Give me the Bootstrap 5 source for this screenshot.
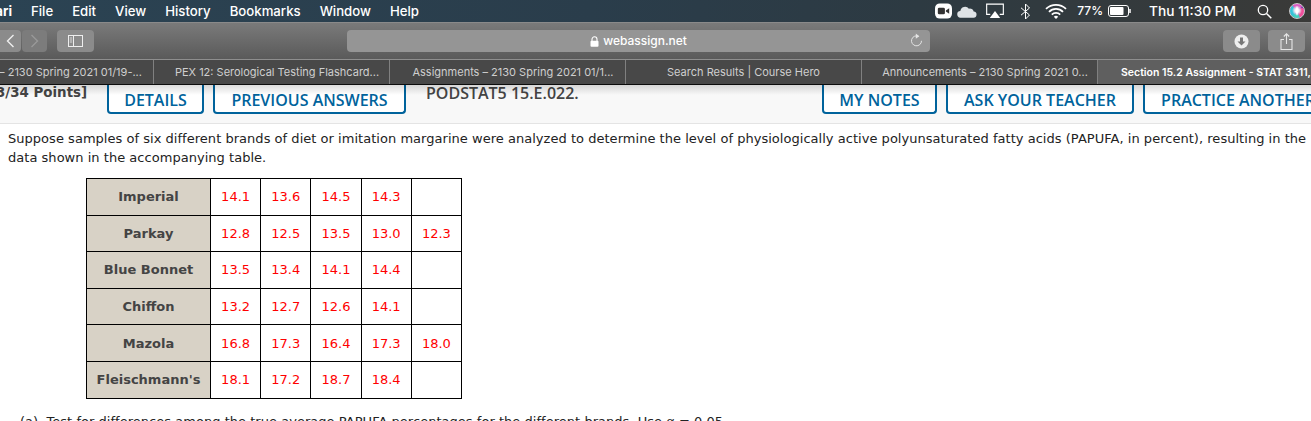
<!DOCTYPE html>
<html lang="en">

<head>
    <meta charset="UTF-8">
    <meta name="viewport" content="width=device-width, initial-scale=1.0">
    <title>Section 15.2 Assignment - STAT 3311</title>
    <link href="https://cdn.jsdelivr.net/npm/bootstrap@5.3.0/dist/css/bootstrap.min.css" rel="stylesheet">
    <style>
        html, body { height: 421px; overflow: hidden; background: #fff; }

        /* Mac menu bar */
        .menu-bar {
            height: 22px;
            background: linear-gradient(90deg, #2b4353 0%, #2a3d4b 45%, #2d3a42 70%, #3a3a38 100%);
            color: #fff;
            font: 500 13.2px/22px "Inter", "Liberation Sans", sans-serif;
            white-space: nowrap;
        }
        .menu-app { margin-left: -26px; font-weight: 700; margin-right: 19px; }
        .menu-item { margin-right: 19px; }
        .status-text { font-size: 12px; margin-right: 5px; }
        .clock { font-size: 13.7px; margin-right: 21px; }

        /* Safari toolbar */
        .tool-bar {
            height: 38px;
            background: linear-gradient(#7a7a7a, #5a5a5a);
            border-top: 1px solid #8a8a8a;
            border-bottom: 1px solid #8e8e8e;
            padding: 7px 6px 0 0;
        }
        .tool-btn {
            height: 22px;
            background: #8b8b8b;
            border-radius: 4px;
            display: flex;
            align-items: center;
            justify-content: center;
        }
        .btn-back { width: 21px; border-radius: 0 4px 4px 0; }
        .btn-forward { width: 25px; margin-left: 1px; background: #7c7c7c; }
        .btn-side { width: 37px; margin-left: 10px; }
        .btn-action { width: 37px; }
        .url-box {
            width: 583px;
            height: 22px;
            margin-left: 253px;
            margin-right: 293px;
            background: #959595;
            border-radius: 4px;
            color: #fff;
            font: 500 12px/22px "Inter", "Liberation Sans", sans-serif;
        }
        .url-reload { right: 7px; top: 3px; }

        /* Tabs */
        .tab-strip {
            height: 25px;
            background: #484848;
            border-bottom: 1px solid #0c0c0c;
            margin-left: -82px;
            width: 1460px;
        }
        .tab-item {
            width: 236px;
            flex: none;
            border-right: 1px solid #808080;
            color: #cfcfcf;
            font: 400 11px/25px "Inter", "Liberation Sans", sans-serif;
            text-align: center;
            white-space: nowrap;
        }
        .tab-cut { padding-left: 11px; }
        .tab-active {
            background: #5f5f5f;
            color: #fff;
            font-weight: 600;
            font-size: 10.5px;
            width: 300px;
            text-align: left;
            padding-left: 23px;
            border-right: 0;
        }

        /* Question header */
        .q-header {
            height: 39px;
            background: #f8f8f8;
            border-bottom: 1px solid #e4e4e4;
            overflow: hidden;
            white-space: nowrap;
        }
        .q-shade {
            left: 0;
            right: 0;
            top: 0;
            height: 10px;
            background: linear-gradient(rgba(0, 0, 0, .14), rgba(0, 0, 0, 0));
        }
        .q-points {
            margin-left: -4px;
            width: 111px;
            font: 700 13.4px/16px "DejaVu Sans", sans-serif;
            color: #444;
            flex: none;
        }
        .q-code {
            font: 600 16px/16px "Open Sans", sans-serif;
            color: #444;
            width: 396px;
            flex: none;
            margin-left: 20px;
        }
        .wa-btn {
            flex: none;
            height: 29px;
            padding: 4px 0 0;
            background: #fff;
            border: 2px solid #00639c;
            border-top: 0;
            border-radius: 0 0 4px 4px;
            color: #00639c;
            font: 600 16px/22px "Open Sans", sans-serif;
            text-align: center;
        }

        /* Question body */
        .q-text {
            font: 400 13px/19px "DejaVu Sans", sans-serif;
            letter-spacing: .03px;
            color: #222;
            padding: 5px 0 0 8px;
            width: 1311px;
        }
        .q-line { white-space: nowrap; }
        .data-table {
            width: 376px;
            margin: 11px 0 0 86px;
            border-collapse: collapse;
            table-layout: fixed;
            font: 400 13px/1 "DejaVu Sans", sans-serif;
        }
        .data-table td, .data-table th {
            border: 1px solid #000;
            text-align: center;
            vertical-align: middle;
            height: 36.6px;
            padding: 0;
            color: #f00;
        }
        .data-table th {
            width: 124px;
            background: #d8d2c6;
            color: #444;
            font-weight: 700;
        }
        .q-part {
            font: 400 13px/19px "DejaVu Sans", sans-serif;
            letter-spacing: .03px;
            color: #222;
            margin: 13px 0 0 20px;
            white-space: nowrap;
        }
    </style>
</head>

<body>

    <!-- Menu bar -->
    <div class="menu-bar d-flex">
        <span class="menu-app">Safari</span>
        <span class="menu-item">File</span>
        <span class="menu-item">Edit</span>
        <span class="menu-item">View</span>
        <span class="menu-item">History</span>
        <span class="menu-item">Bookmarks</span>
        <span class="menu-item">Window</span>
        <span class="menu-item">Help</span>
        <div class="ms-auto d-flex align-items-center">
            <!-- zoom -->
            <svg width="17" height="16" viewBox="0 0 18 16" style="margin-right:5px">
                <rect x="0" y="0" width="18" height="16" rx="5" fill="#fff"/>
                <rect x="3" y="4.500" width="7.500" height="7" rx="1.500" fill="#333"/>
                <path d="M11.500 7.500 15 5v6l-3.500-2.500z" fill="#333"/>
            </svg>
            <!-- cloud -->
            <svg width="20" height="13" viewBox="0 0 21 13" style="margin-right:9px">
                <path d="M4 13a3.500 3.500 0 0 1-.5-7 5 5 0 0 1 9-2.500 4 4 0 0 1 5 3A3.200 3.200 0 0 1 17 13z" fill="#dfe3e6"/>
            </svg>
            <!-- airplay -->
            <svg width="18" height="16" viewBox="0 0 19 16" style="margin-right:16px">
                <path d="M4.500 11.500H.7V.7h17.600v10.800h-3.800" fill="none" stroke="#fff" stroke-width="1.200"/>
                <path d="M9.500 8 15 15.500H4z" fill="#fff"/>
            </svg>
            <!-- bluetooth -->
            <svg width="11" height="17" viewBox="0 0 11 17" style="margin-right:14px">
                <path d="M1 4.800 9.500 12 5.500 16V1l4 4L1 12.200" fill="none" stroke="#fff" stroke-width="1"/>
            </svg>
            <!-- wifi -->
            <svg width="22" height="16" viewBox="0 0 22 16" style="margin-right:10px">
                <path d="M1 5.800a14.500 14.500 0 0 1 20 0M4 8.800a10 10 0 0 1 14 0M6.800 11.600a6 6 0 0 1 8.400 0" fill="none" stroke="#fff" stroke-width="1.800"/>
                <path d="M8.800 13.800a3.200 3.200 0 0 1 4.400 0L11 16z" fill="#fff"/>
            </svg>
            <span class="status-text">77%</span>
            <!-- battery -->
            <svg width="23" height="12" viewBox="0 0 23 12" style="margin-right:18px">
                <rect x=".5" y=".5" width="20" height="11" rx="2.500" fill="none" stroke="#fff"/>
                <rect x="2" y="2" width="13.500" height="8" rx="1" fill="#fff"/>
                <path d="M22 4v4" stroke="#fff" stroke-width="1.500"/>
            </svg>
            <span class="clock">Thu 11:30 PM</span>
            <!-- spotlight -->
            <svg width="15" height="15" viewBox="0 0 15 15" style="margin-right:17px">
                <circle cx="6" cy="6" r="4.700" fill="none" stroke="#fff" stroke-width="1.300"/>
                <path d="m9.500 9.500 4.800 4.800" stroke="#fff" stroke-width="1.500"/>
            </svg>
            <!-- siri -->
            <svg width="16" height="16" viewBox="0 0 16 16" style="margin-right:6px">
                <defs>
                    <clipPath id="siriClip"><circle cx="8" cy="8" r="7.200"/></clipPath>
                    <radialGradient id="siriGlow">
                        <stop offset="0" stop-color="#fff"/>
                        <stop offset=".45" stop-color="#f4e6f6"/>
                        <stop offset="1" stop-color="#f4e6f6" stop-opacity="0"/>
                    </radialGradient>
                </defs>
                <g clip-path="url(#siriClip)">
                    <rect width="16" height="16" fill="#7a3fb0"/>
                    <ellipse cx="3" cy="8" rx="4" ry="5.500" fill="#35c3d8"/>
                    <ellipse cx="8" cy="14" rx="5" ry="3" fill="#3fd0c0"/>
                    <ellipse cx="13" cy="10" rx="3.500" ry="5" fill="#f0509a"/>
                    <ellipse cx="8.500" cy="2.500" rx="4.500" ry="3" fill="#d85cc0"/>
                    <circle cx="8" cy="7.500" r="5" fill="url(#siriGlow)"/>
                    <path d="M8 2.500 9.600 8 8 13 6.400 8z" fill="#fff"/>
                </g>
                <circle cx="8" cy="8" r="7.500" fill="none" stroke="#e8e8e8" stroke-width=".8"/>
            </svg>
        </div>
    </div>

    <!-- Toolbar -->
    <div class="tool-bar d-flex">
        <div class="tool-btn btn-back">
            <svg width="9" height="14" viewBox="0 0 9 14"><path d="M7.500 1 1.500 7l6 6" fill="none" stroke="#eee" stroke-width="1.400"/></svg>
        </div>
        <div class="tool-btn btn-forward">
            <svg width="9" height="14" viewBox="0 0 9 14"><path d="m1.500 1 6 6-6 6" fill="none" stroke="#999" stroke-width="1.400"/></svg>
        </div>
        <div class="tool-btn btn-side">
            <svg width="15" height="12" viewBox="0 0 15 12">
                <rect x=".5" y=".5" width="14" height="11" fill="none" stroke="#eee"/>
                <path d="M5.500 .5v11" stroke="#eee"/>
                <path d="M1.800 3h2.400M1.800 5h2.400M1.800 7h2.400" stroke="#eee" stroke-width=".8"/>
            </svg>
        </div>
        <div class="url-box position-relative text-center">
            <svg width="9" height="11" viewBox="0 0 9 11" class="me-1">
                <path d="M2 5V3.300a2.500 2.500 0 0 1 5 0V5" fill="none" stroke="#fff" stroke-width="1.100"/>
                <rect x=".5" y="4.800" width="8" height="6" rx="1" fill="#fff"/>
            </svg>webassign.net
            <svg class="url-reload position-absolute" width="14" height="15" viewBox="0 0 14 15">
                <path d="M9.600 3.300a5 5 0 1 0 2.900 4.500" fill="none" stroke="#e4e4e4" stroke-width="1"/>
                <path d="M6.800 .5 10.300 3.300 6.800 5.800z" fill="#e4e4e4"/>
            </svg>
        </div>
        <div class="tool-btn btn-action">
            <svg width="15" height="15" viewBox="0 0 15 15">
                <circle cx="7.500" cy="7.500" r="7" fill="#eee"/>
                <path d="M6 3.500h3v4h2.500l-4 4-4-4H6z" fill="#777"/>
            </svg>
        </div>
        <div class="tool-btn btn-action ms-2">
            <svg width="13" height="17" viewBox="0 0 13 17">
                <path d="M4 6.500H1v10h11v-10H9" fill="none" stroke="#e6e6e6" stroke-width="1.100"/>
                <path d="M6.500 11V1M3.800 3.500 6.500 .8l2.700 2.700" fill="none" stroke="#e6e6e6" stroke-width="1.100"/>
            </svg>
        </div>
    </div>

    <!-- Tabs -->
    <div class="tab-strip d-flex">
        <div class="tab-item">Assignments &ndash; 2130 Spring 2021 01/19-...</div>
        <div class="tab-item tab-cut">PEX 12: Serological Testing Flashcard...</div>
        <div class="tab-item tab-cut">Assignments &ndash; 2130 Spring 2021 01/1...</div>
        <div class="tab-item">Search Results | Course Hero</div>
        <div class="tab-item tab-cut">Announcements &ndash; 2130 Spring 2021 0...</div>
        <div class="tab-item tab-active">Section 15.2 Assignment - STAT 3311, Spring</div>
    </div>

    <!-- Question header -->
    <div class="q-header d-flex position-relative">
        <div class="q-points">3/34 Points]</div>
        <div class="wa-btn" style="width:97px">DETAILS</div>
        <div class="wa-btn" style="width:193px;margin-left:9px">PREVIOUS ANSWERS</div>
        <div class="q-code">PODSTAT5 15.E.022.</div>
        <div class="wa-btn" style="width:115px">MY NOTES</div>
        <div class="wa-btn" style="width:188px;margin-left:9px">ASK YOUR TEACHER</div>
        <div class="wa-btn" style="width:190px;margin-left:9px">PRACTICE ANOTHER</div>
        <div class="q-shade position-absolute"></div>
    </div>

    <!-- Question -->
    <div class="q-text">
        <div class="q-line">Suppose samples of six different brands of diet or imitation margarine were analyzed to determine the level of physiologically active polyunsaturated fatty acids (PAPUFA, in percent), resulting in the</div>
        <div class="q-line">data shown in the accompanying table.</div>
    </div>
    <table class="data-table">
        <tbody id="margarine-rows"></tbody>
    </table>
    <div class="q-part">(a)&nbsp; Test for differences among the true average PAPUFA percentages for the different brands. Use &alpha; = 0.05.</div>

    <script src="https://cdn.jsdelivr.net/npm/bootstrap@5.3.0/dist/js/bootstrap.bundle.min.js"></script>
    <script>
        const rows = [
            ["Imperial", "14.1", "13.6", "14.5", "14.3", ""],
            ["Parkay", "12.8", "12.5", "13.5", "13.0", "12.3"],
            ["Blue Bonnet", "13.5", "13.4", "14.1", "14.4", ""],
            ["Chiffon", "13.2", "12.7", "12.6", "14.1", ""],
            ["Mazola", "16.8", "17.3", "16.4", "17.3", "18.0"],
            ["Fleischmann's", "18.1", "17.2", "18.7", "18.4", ""]
        ];
        const body = document.getElementById("margarine-rows");
        rows.forEach((item) => {
            const row = document.createElement("tr");
            row.innerHTML = `<th>${item[0]}</th>` + item.slice(1).map((v) => `<td>${v}</td>`).join("");
            body.appendChild(row);
        });
    </script>
</body>

</html>
